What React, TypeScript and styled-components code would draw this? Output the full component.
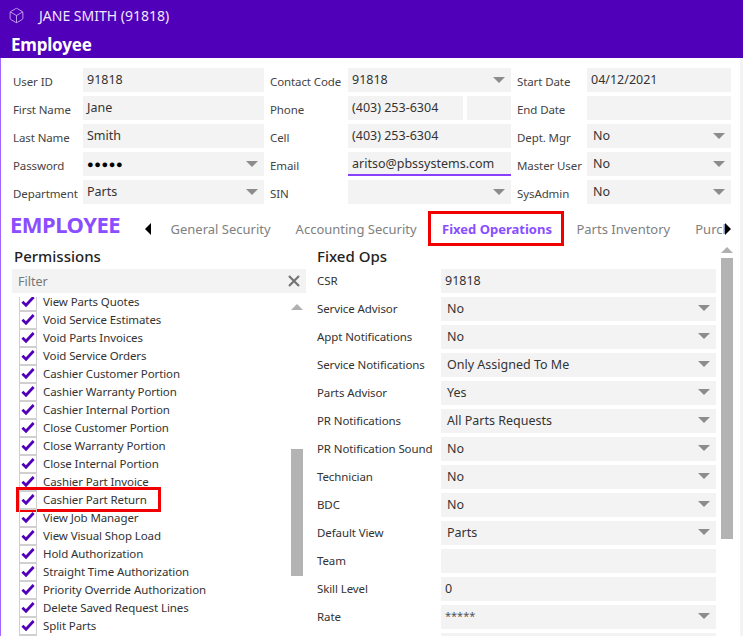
import React from "react";
import styled, { createGlobalStyle } from "styled-components";
import { Box } from "lucide-react";

const permissions = [
  "View Parts Quotes",
  "Void Service Estimates",
  "Void Parts Invoices",
  "Void Service Orders",
  "Cashier Customer Portion",
  "Cashier Warranty Portion",
  "Cashier Internal Portion",
  "Close Customer Portion",
  "Close Warranty Portion",
  "Close Internal Portion",
  "Cashier Part Invoice",
  "Cashier Part Return",
  "View Job Manager",
  "View Visual Shop Load",
  "Hold Authorization",
  "Straight Time Authorization",
  "Priority Override Authorization",
  "Delete Saved Request Lines",
  "Split Parts",
  "",
];

const fixedOps = [
  { label: "CSR", value: "91818" },
  { label: "Service Advisor", value: "No", select: true },
  { label: "Appt Notifications", value: "No", select: true },
  { label: "Service Notifications", value: "Only Assigned To Me", select: true },
  { label: "Parts Advisor", value: "Yes", select: true },
  { label: "PR Notifications", value: "All Parts Requests", select: true },
  { label: "PR Notification Sound", value: "No", select: true },
  { label: "Technician", value: "No", select: true },
  { label: "BDC", value: "No", select: true },
  { label: "Default View", value: "Parts", select: true },
  { label: "Team", value: "" },
  { label: "Skill Level", value: "0" },
  { label: "Rate", value: "*****", select: true, masked: true },
  { label: "", value: "" },
];

function Check() {
  return (
    <CheckBox>
      <svg width="16" height="16" viewBox="0 0 16 16">
        <path d="M2.4 7.8 L6 11.2 L13.6 3" fill="none" stroke="#5000b8" strokeWidth="2.8" />
      </svg>
    </CheckBox>
  );
}

export default function App() {
  return (
    <>
      <GlobalStyle />
      <Page>
        <TitleBar>
          <TitleRow>
            <Box size={17} strokeWidth={1.3} color="#c6a6ee" />
            <WindowName>JANE SMITH (91818)</WindowName>
          </TitleRow>
          <ScreenName>Employee</ScreenName>
        </TitleBar>

        <Body>
          <FormGrid>
            <FormLabel>User ID</FormLabel>
            <Field>91818</Field>
            <FormLabel>Contact Code</FormLabel>
            <Field $select>91818</Field>
            <FormLabel>Start Date</FormLabel>
            <Field>04/12/2021</Field>

            <FormLabel>First Name</FormLabel>
            <Field>Jane</Field>
            <FormLabel>Phone</FormLabel>
            <PhonePair>
              <Field>(403) 253-6304</Field>
              <Field />
            </PhonePair>
            <FormLabel>End Date</FormLabel>
            <Field />

            <FormLabel>Last Name</FormLabel>
            <Field>Smith</Field>
            <FormLabel>Cell</FormLabel>
            <Field>(403) 253-6304</Field>
            <FormLabel>Dept. Mgr</FormLabel>
            <Field $select $indent>No</Field>

            <FormLabel>Password</FormLabel>
            <Field $select $dots>●●●●●</Field>
            <FormLabel>Email</FormLabel>
            <Field $focused>aritso@pbssystems.com</Field>
            <FormLabel>Master User</FormLabel>
            <Field $select $indent>No</Field>

            <FormLabel>Department</FormLabel>
            <Field $select>Parts</Field>
            <FormLabel>SIN</FormLabel>
            <Field $select />
            <FormLabel>SysAdmin</FormLabel>
            <Field $select $indent>No</Field>
          </FormGrid>

          <TabBar>
            <Heading>EMPLOYEE</Heading>
            <TabArrow $dir="left" />
            <TabStrip>
              <Tab>General Security</Tab>
              <Tab>Accounting Security</Tab>
              <Tab $active>Fixed Operations</Tab>
              <Tab>Parts Inventory</Tab>
              <Tab>Purchasing</Tab>
            </TabStrip>
            <TabArrow $dir="right" />
          </TabBar>

          <Main>
            <PermissionsPanel>
              <PanelTitle>Permissions</PanelTitle>
              <FilterBox>
                Filter
                <svg width="12" height="12" viewBox="0 0 12 12">
                  <path d="M1 1 L11 11 M11 1 L1 11" stroke="#757575" strokeWidth="2.2" />
                </svg>
              </FilterBox>
              <ListArea>
                <PermissionList>
                  {permissions.map((name, i) => (
                    <PermissionRow key={i} $marked={name === "Cashier Part Return"}>
                      <Check />
                      <RowText>{name}</RowText>
                    </PermissionRow>
                  ))}
                </PermissionList>
                <ListScrollbar>
                  <ScrollUp />
                  <ListThumb />
                </ListScrollbar>
              </ListArea>
            </PermissionsPanel>

            <OpsPanel>
              <OpsForm>
                <PanelTitle>Fixed Ops</PanelTitle>
                <OpsGrid>
                  {fixedOps.map((row, i) => (
                    <React.Fragment key={i}>
                      <OpsLabel>{row.label}</OpsLabel>
                      <OpsField $select={row.select} $masked={row.masked}>{row.value}</OpsField>
                    </React.Fragment>
                  ))}
                </OpsGrid>
              </OpsForm>
              <OpsScrollbar>
                <ScrollUp />
                <OpsThumb />
              </OpsScrollbar>
            </OpsPanel>
          </Main>
        </Body>
      </Page>
    </>
  );
}

const GlobalStyle = createGlobalStyle`
  html, body {
    margin: 0;
    background: #ffffff;
  }
  *, *::after {
    box-sizing: border-box;
  }
`;

const Page = styled.div`
  width: 743px;
  height: 636px;
  display: flex;
  flex-direction: column;
  overflow: hidden;
  font-family: "Noto Sans", "Open Sans", sans-serif;
  color: #333333;
`;

const TitleBar = styled.header`
  height: 58px;
  flex: none;
  background: #5000b8;
  color: #ffffff;
  padding: 5px 0 0 8px;
`;

const TitleRow = styled.div`
  display: flex;
  align-items: center;
  height: 20px;
  gap: 14px;
`;

const WindowName = styled.span`
  font-size: 14px;
  color: #f0e8fb;
`;

const ScreenName = styled.div`
  margin: 8px 0 0 3px;
  font-size: 17px;
  font-weight: 700;
  line-height: 24px;
  letter-spacing: -0.2px;
`;

const Body = styled.main`
  flex: 1;
  min-height: 0;
  display: flex;
  flex-direction: column;
  border-left: 1px solid #a566ff;
  border-right: 3px solid #f3f3f3;
  padding: 10px 9px 0 12px;
`;

const FormGrid = styled.section`
  display: grid;
  grid-template-columns: 64px 181px 72px 163px 64px 144px;
  grid-auto-rows: 24px;
  column-gap: 6px;
  row-gap: 4px;
`;

const FormLabel = styled.label`
  font-size: 11.5px;
  letter-spacing: -0.1px;
  line-height: 28px;
  white-space: nowrap;
  color: #444444;
`;

const Field = styled.div<{
  $select?: boolean;
  $focused?: boolean;
  $dots?: boolean;
  $indent?: boolean;
}>`
  position: relative;
  height: 24px;
  min-width: 0;
  background: #f3f3f3;
  padding-left: ${(p) => (p.$indent ? "6px" : "4px")};
  font-size: ${(p) => (p.$dots ? "11px" : "12.5px")};
  letter-spacing: ${(p) => (p.$dots ? "0.6px" : "0")};
  line-height: 23px;
  color: ${(p) => (p.$dots ? "#000000" : "#333333")};
  white-space: nowrap;
  border-bottom: ${(p) => (p.$focused ? "2px solid #8a3ffc" : "none")};

  ${(p) =>
    p.$select &&
    `
    &::after {
      content: "";
      position: absolute;
      right: 6px;
      top: 9px;
      border-left: 6px solid transparent;
      border-right: 6px solid transparent;
      border-top: 6px solid #8c8c8c;
    }
  `}
`;

const PhonePair = styled.div`
  display: grid;
  grid-template-columns: 115px 44px;
  column-gap: 4px;
`;

const TabBar = styled.nav`
  height: 35px;
  margin: 7px 0 0 -3px;
  flex: none;
  display: flex;
  align-items: center;
`;

const Heading = styled.h1`
  width: 135px;
  margin: 0;
  padding-bottom: 9px;
  font-size: 22px;
  font-weight: 700;
  letter-spacing: -0.5px;
  color: #8a4dff;
`;

const TabArrow = styled.span<{ $dir: "left" | "right" }>`
  flex: none;
  border-top: 6px solid transparent;
  border-bottom: 6px solid transparent;
  ${(p) =>
    p.$dir === "left" ? "border-right: 6px solid #000000;" : "border-left: 6px solid #000000;"}
`;

const TabStrip = styled.div`
  flex: 1;
  min-width: 0;
  height: 100%;
  display: flex;
  align-items: stretch;
  overflow: hidden;
  padding-left: 7px;
`;

const Tab = styled.div<{ $active?: boolean }>`
  flex: none;
  display: flex;
  align-items: center;
  margin-left: ${(p) => (p.$active ? "-1px" : "0")};
  padding: ${(p) => (p.$active ? "0 9px 0 11px" : "0 12.5px")};
  border: ${(p) => (p.$active ? "3px solid #f00000" : "none")};
  font-size: 13px;
  font-weight: ${(p) => (p.$active ? 700 : 400)};
  color: ${(p) => (p.$active ? "#8a4dff" : "#808080")};
  white-space: nowrap;
`;

const Main = styled.div`
  flex: 1;
  min-height: 0;
  margin-left: -1px;
  display: flex;
  gap: 11px;
`;

const PermissionsPanel = styled.section`
  width: 294px;
  flex: none;
  display: flex;
  flex-direction: column;
  min-height: 0;
`;

const PanelTitle = styled.h2`
  height: 23px;
  margin: 0 0 0 2px;
  font-size: 15px;
  font-weight: 500;
  line-height: 21px;
  color: #222222;
`;

const FilterBox = styled.div`
  height: 24px;
  flex: none;
  display: flex;
  align-items: center;
  justify-content: space-between;
  background: #f3f3f3;
  padding: 0 6px;
  font-size: 12.5px;
  color: #777777;
`;

const ListArea = styled.div`
  flex: 1;
  min-height: 0;
  margin-top: 4px;
  display: flex;
  overflow: hidden;
`;

const PermissionList = styled.div`
  flex: 1;
  margin-top: -4px;
`;

const PermissionRow = styled.div<{ $marked?: boolean }>`
  position: relative;
  height: 18px;
  display: flex;
  align-items: center;
  gap: 6px;
  padding-left: 7px;

  ${(p) =>
    p.$marked &&
    `
    &::after {
      content: "";
      position: absolute;
      left: 4px;
      top: -4px;
      width: 145px;
      height: 25px;
      border: 3px solid #f00000;
    }
  `}
`;

const RowText = styled.span`
  margin-top: -2px;
  font-size: 11.5px;
  letter-spacing: -0.1px;
  color: #333333;
  white-space: nowrap;
`;

const CheckBox = styled.span`
  flex: none;
  width: 18px;
  height: 18px;
  display: flex;
  align-items: center;
  justify-content: center;
  border: 1px solid #d0d0d0;
`;

const ListScrollbar = styled.div`
  width: 12px;
  flex: none;
  margin-right: 3px;
  padding-top: 7px;
  display: flex;
  flex-direction: column;
`;

const ScrollUp = styled.span`
  flex: none;
  width: 0;
  border-left: 6px solid transparent;
  border-right: 6px solid transparent;
  border-bottom: 6px solid #b0b0b0;
`;

const ListThumb = styled.div`
  height: 127px;
  margin-top: 139px;
  flex: none;
  background: #b3b3b3;
`;

const OpsPanel = styled.section`
  flex: 1;
  min-width: 0;
  display: flex;
  gap: 5px;
`;

const OpsForm = styled.div`
  width: 399px;
  flex: none;
  & > h2 {
    margin-left: 0;
  }
`;

const OpsGrid = styled.div`
  display: grid;
  grid-template-columns: 124px 275px;
  grid-auto-rows: 24px;
  row-gap: 4px;
`;

const OpsLabel = styled.div`
  font-size: 11.5px;
  letter-spacing: -0.1px;
  line-height: 23px;
  color: #333333;
  white-space: nowrap;
`;

const OpsField = styled.div<{ $select?: boolean; $masked?: boolean }>`
  position: relative;
  background: #f3f3f3;
  padding-left: ${(p) => (p.$select && !p.$masked ? "6px" : "4px")};
  font-size: ${(p) => (p.$masked ? "11px" : "12.5px")};
  line-height: ${(p) => (p.$masked ? "21px" : "24px")};
  color: ${(p) => (p.$masked ? "#555555" : "#333333")};
  white-space: nowrap;

  ${(p) =>
    p.$select &&
    `
    &::after {
      content: "";
      position: absolute;
      right: 6px;
      top: 8px;
      border-left: 6px solid transparent;
      border-right: 6px solid transparent;
      border-top: 6px solid #8c8c8c;
    }
  `}
`;

const OpsScrollbar = styled.div`
  width: 12px;
  flex: none;
  padding-top: 1px;
  display: flex;
  flex-direction: column;
`;

const OpsThumb = styled.div`
  height: 281px;
  margin-top: 5px;
  flex: none;
  background: #b3b3b3;
`;
